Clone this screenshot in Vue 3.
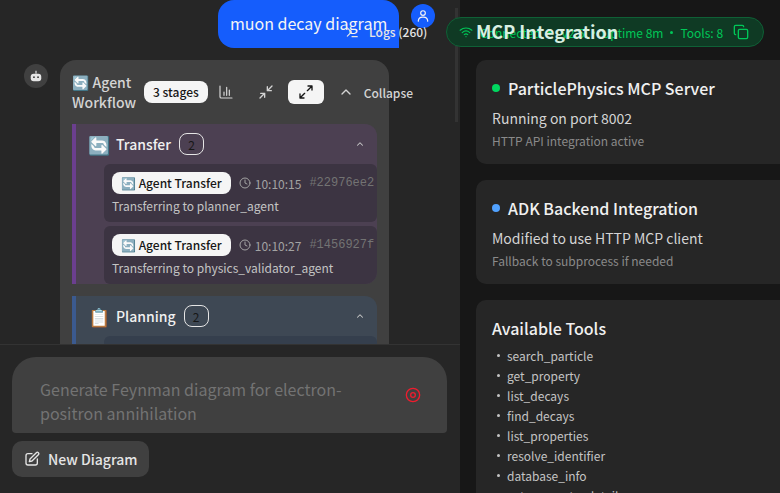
<template>
  <div class="page">
    <section class="chat">
      <div class="messages">
        <div class="user-row">
          <div class="user-bubble">muon decay diagram</div>
          <span class="user-avatar">
            <svg width="14" height="14" viewBox="0 0 24 24" fill="none" stroke="currentColor" stroke-width="2" stroke-linecap="round" stroke-linejoin="round">
              <circle cx="12" cy="7" r="4" />
              <path d="M4 21v-1a7 7 0 0 1 7-6h2a7 7 0 0 1 7 6v1" />
            </svg>
          </span>
        </div>
        <div class="bot-row">
          <span class="bot-avatar">
            <svg width="14" height="14" viewBox="0 0 24 24" fill="currentColor">
              <rect x="3" y="8" width="18" height="13" rx="5" />
              <rect x="11" y="3" width="2" height="5" />
              <circle cx="8.5" cy="14" r="1.6" fill="#3d3d3d" />
              <circle cx="15.5" cy="14" r="1.6" fill="#3d3d3d" />
            </svg>
          </span>
          <div class="workflow">
            <div class="wf-head">
              <div class="wf-title">🔄 Agent Workflow</div>
              <span class="stages">3 stages</span>
              <button class="icon-btn first">
                <svg width="16" height="16" viewBox="0 0 24 24" fill="none" stroke="currentColor" stroke-width="1.8" stroke-linecap="round">
                  <path d="M3 3v16a2 2 0 0 0 2 2h16" />
                  <path d="M9 17v-5M13 17V5M17 17V9" />
                </svg>
              </button>
              <button class="icon-btn">
                <svg width="16" height="16" viewBox="0 0 24 24" fill="none" stroke="currentColor" stroke-width="2" stroke-linecap="round" stroke-linejoin="round">
                  <path d="M14 10l7-7M14 4v6h6M10 14l-7 7M4 14h6v6" />
                </svg>
              </button>
              <button class="icon-btn active">
                <svg width="16" height="16" viewBox="0 0 24 24" fill="none" stroke="currentColor" stroke-width="2" stroke-linecap="round" stroke-linejoin="round">
                  <path d="M15 3h6v6M21 3l-7 7M9 21H3v-6M3 21l7-7" />
                </svg>
              </button>
              <button class="collapse">
                <svg width="16" height="16" viewBox="0 0 24 24" fill="none" stroke="currentColor" stroke-width="2" stroke-linecap="round" stroke-linejoin="round">
                  <path d="M6 15l6-6 6 6" />
                </svg>
                <span>Collapse</span>
              </button>
            </div>
            <div v-for="stage in stages" :key="stage.name" class="stage" :class="stage.cls">
              <div class="stage-head">
                <span class="stage-emoji">{{ stage.emoji }}</span>
                <span class="stage-name">{{ stage.name }}</span>
                <span class="stage-count">2</span>
                <svg class="stage-chevron" width="10" height="10" viewBox="0 0 24 24" fill="none" stroke="currentColor" stroke-width="2.5" stroke-linecap="round" stroke-linejoin="round">
                  <path d="M6 15l6-6 6 6" />
                </svg>
              </div>
              <div v-for="ev in stage.events" :key="ev.id" class="event">
                <div class="event-top">
                  <span class="event-tag">🔄 Agent Transfer</span>
                  <span class="event-time">
                    <svg width="12" height="12" viewBox="0 0 24 24" fill="none" stroke="currentColor" stroke-width="2" stroke-linecap="round" stroke-linejoin="round">
                      <circle cx="12" cy="12" r="10" />
                      <path d="M12 6v6l4 2" />
                    </svg>
                    {{ ev.time }}
                  </span>
                  <span class="event-id">{{ ev.id }}</span>
                </div>
                <div class="event-text">{{ ev.text }}</div>
              </div>
              <div v-if="!stage.events.length" class="event"></div>
            </div>
          </div>
        </div>
      </div>
      <div class="composer">
        <div class="input-box">
          <div class="placeholder">Generate Feynman diagram for electron-positron annihilation</div>
          <svg class="record" width="16" height="16" viewBox="0 0 24 24" fill="none" stroke="#ef1c2e" stroke-width="2">
            <circle cx="12" cy="12" r="10" />
            <circle cx="12" cy="12" r="3.5" />
          </svg>
        </div>
        <button class="new-btn">
          <svg width="16" height="16" viewBox="0 0 24 24" fill="none" stroke="currentColor" stroke-width="2" stroke-linecap="round" stroke-linejoin="round">
            <path d="M12 4H6a3 3 0 0 0-3 3v11a3 3 0 0 0 3 3h11a3 3 0 0 0 3-3v-6" />
            <path d="M18.5 2.5a2.1 2.1 0 0 1 3 3L12 15l-4 1 1-4z" />
          </svg>
          New Diagram
        </button>
      </div>
    </section>

    <aside class="side">
      <span class="rail-thumb"></span>
      <div class="side-body">
        <div class="side-title">MCP Integration</div>
        <div class="card">
          <div class="card-title"><span class="dot green"></span>ParticlePhysics MCP Server</div>
          <div class="card-main">Running on port 8002</div>
          <div class="card-sub">HTTP API integration active</div>
        </div>
        <div class="card">
          <div class="card-title"><span class="dot blue"></span>ADK Backend Integration</div>
          <div class="card-main">Modified to use HTTP MCP client</div>
          <div class="card-sub">Fallback to subprocess if needed</div>
        </div>
        <div class="card">
          <div class="card-title plain">Available Tools</div>
          <ul class="tools">
            <li v-for="t in tools" :key="t">{{ t }}</li>
          </ul>
        </div>
      </div>
    </aside>

    <div class="logs">
      <svg width="14" height="14" viewBox="0 0 24 24" fill="none" stroke="currentColor" stroke-width="2" stroke-linecap="round" stroke-linejoin="round">
        <path d="M4 5l7 7-7 7M12 20h9" />
      </svg>
      <span>Logs (260)</span>
    </div>
    <div class="status">
      <svg class="wifi" width="14" height="14" viewBox="0 0 24 24" fill="none" stroke="currentColor" stroke-width="2" stroke-linecap="round">
        <path d="M2 9a15 15 0 0 1 20 0M5.5 13a10 10 0 0 1 13 0M9 16.5a5 5 0 0 1 6 0M12 20h.01" />
      </svg>
      <span>Connected</span>
      <span class="sep"></span>
      <span class="ver">v2.5</span>
      <span class="sep"></span>
      <span>Uptime 8m</span>
      <span class="sep"></span>
      <span>Tools: 8</span>
      <svg class="copy" width="16" height="16" viewBox="0 0 24 24" fill="none" stroke="currentColor" stroke-width="2" stroke-linecap="round" stroke-linejoin="round">
        <rect x="8" y="8" width="14" height="14" rx="2" />
        <path d="M4 16a2 2 0 0 1-2-2V4a2 2 0 0 1 2-2h10a2 2 0 0 1 2 2" />
      </svg>
    </div>
  </div>
</template>

<script setup>
const stages = [
  {
    name: 'Transfer',
    emoji: '🔄',
    cls: 'purple',
    events: [
      { id: '#22976ee2', time: '10:10:15', text: 'Transferring to planner_agent' },
      { id: '#1456927f', time: '10:10:27', text: 'Transferring to physics_validator_agent' }
    ]
  },
  { name: 'Planning', emoji: '📋', cls: 'blue', events: [] }
]

const tools = [
  'search_particle',
  'get_property',
  'list_decays',
  'find_decays',
  'list_properties',
  'resolve_identifier',
  'database_info',
  'get_property_details'
]
</script>

<style>
html,
body {
  margin: 0;
  background: #171717;
  overflow: hidden;
}
</style>

<style scoped>
.page {
  position: relative;
  display: flex;
  width: 780px;
  height: 493px;
  overflow: hidden;
  color: #e5e5e5;
  font-family: "Noto Sans CJK SC", "Noto Sans", "Noto Color Emoji", sans-serif;
}

.chat {
  display: flex;
  flex-direction: column;
  flex: none;
  width: 460px;
  height: 493px;
  background: #262626;
}

.messages {
  flex: none;
  height: 345px;
  padding: 0 0 0 24px;
  box-sizing: border-box;
  overflow: hidden;
  border-bottom: 1px solid #333;
}

.user-row {
  display: flex;
  justify-content: flex-end;
  gap: 12px;
  width: 411px;
}

.user-bubble {
  box-sizing: border-box;
  width: 181px;
  height: 48px;
  padding: 11px 12px;
  background: #155dfc;
  border-radius: 16px 16px 0 16px;
  color: #f5f5f5;
  font-size: 16px;
  line-height: 24px;
  white-space: nowrap;
}

.user-avatar {
  display: flex;
  align-items: center;
  justify-content: center;
  width: 24px;
  height: 24px;
  margin-top: 4px;
  border-radius: 50%;
  background: #155dfc;
  color: #f5f5f5;
}

.bot-row {
  display: flex;
  gap: 12px;
  margin-top: 12px;
}

.bot-avatar {
  display: flex;
  align-items: center;
  justify-content: center;
  flex: none;
  width: 24px;
  height: 24px;
  margin-top: 4px;
  border-radius: 50%;
  background: #404040;
  color: #e5e5e5;
}

.workflow {
  flex: none;
  box-sizing: border-box;
  width: 329px;
  height: 320px;
  padding: 12px 0 0 12px;
  border-radius: 16px 16px 0 0;
  background: #404040;
}

.wf-head {
  display: flex;
  align-items: center;
  width: 360px;
  height: 40px;
  margin-bottom: 12px;
}

.wf-title {
  width: 72px;
  font-size: 14px;
  font-weight: 500;
  line-height: 20px;
  color: #d4d4d4;
}

.stages {
  display: flex;
  align-items: center;
  box-sizing: border-box;
  height: 22px;
  padding: 0 9px 1px;
  border-radius: 8px;
  background: #f5f5f5;
  color: #171717;
  font-size: 12px;
  font-weight: 500;
}

.icon-btn {
  display: flex;
  align-items: center;
  justify-content: center;
  width: 36px;
  height: 24px;
  padding: 0;
  border: 0;
  border-radius: 6px;
  background: transparent;
  color: #d4d4d4;
}

.icon-btn.first {
  margin-right: 4px;
}

.icon-btn.active {
  margin-left: 4px;
  background: #f5f5f5;
  color: #171717;
}

.collapse {
  display: flex;
  align-items: center;
  gap: 10px;
  margin-left: 14px;
  padding: 0;
  border: 0;
  background: transparent;
  color: #d4d4d4;
  font: inherit;
  font-size: 12px;
  font-weight: 500;
}

.stage {
  box-sizing: border-box;
  width: 305px;
  margin-bottom: 12px;
  border-left: 4px solid;
  border-radius: 0 12px 12px 0;
  overflow: hidden;
}

.stage.purple {
  background: #4c4052;
  border-color: #6b3f8f;
}

.stage.blue {
  background: #3e4854;
  border-color: #3b5a8f;
}

.stage-head {
  display: flex;
  align-items: center;
  height: 40px;
  padding: 0 12px;
}

.stage-emoji {
  width: 28px;
  font-size: 18px;
  line-height: 1;
}

.stage-name {
  font-size: 14px;
  font-weight: 500;
  color: #f0f0f0;
}

.stage-count {
  display: flex;
  align-items: center;
  justify-content: center;
  box-sizing: border-box;
  min-width: 25px;
  height: 22px;
  margin-left: 8px;
  border: 1px solid #e5e5e5;
  border-radius: 8px;
  color: #171717;
  font-size: 12px;
}

.stage-chevron {
  margin-left: auto;
  color: #c8c8c8;
}

.event {
  box-sizing: border-box;
  height: 58px;
  margin: 0 0 4px 28px;
  padding: 8px 0 0 8px;
  border-radius: 6px;
  background: #3c3442;
  overflow: hidden;
  white-space: nowrap;
}

.event:last-child {
  margin-bottom: 0;
}

.stage.blue .event {
  background: #353f4d;
}

.event-top {
  display: flex;
  align-items: center;
  height: 22px;
}

.event-tag {
  display: flex;
  align-items: center;
  box-sizing: border-box;
  height: 22px;
  padding: 0 9px 1px;
  border-radius: 8px;
  background: #f5f5f5;
  color: #171717;
  font-size: 12px;
  font-weight: 500;
}

.event-time {
  display: flex;
  align-items: center;
  gap: 4px;
  margin-left: 8px;
  color: #a3a3a3;
  font-size: 12px;
}

.event-id {
  margin-left: 8px;
  color: #737373;
  font-family: "Liberation Mono", monospace;
  font-size: 12px;
}

.event-text {
  margin-top: 3px;
  color: #c4c4c4;
  font-size: 12px;
  line-height: 18px;
}

.composer {
  flex: 1;
  padding: 12px;
}

.input-box {
  display: flex;
  align-items: flex-start;
  box-sizing: border-box;
  width: 435px;
  height: 76px;
  padding: 20px 26px 0 28px;
  border-radius: 24px 24px 4px 4px;
  background: #404040;
}

.placeholder {
  width: 320px;
  color: #737373;
  font-size: 16px;
  line-height: 24px;
}

.record {
  margin: 10px 0 0 auto;
}

.new-btn {
  display: flex;
  align-items: center;
  gap: 8px;
  height: 36px;
  margin-top: 8px;
  padding: 0 11px 0 12px;
  border: 0;
  border-radius: 10px;
  background: #404040;
  color: #e5e5e5;
  font: inherit;
  font-size: 14px;
  font-weight: 500;
}

.side {
  position: relative;
  display: flex;
  flex: 1;
  min-width: 0;
  background: #171717;
}

.rail-thumb {
  position: absolute;
  left: -5px;
  top: 8px;
  width: 3px;
  height: 114px;
  background: #333;
}

.side-body {
  flex: 1;
  padding: 18px 0 0 16px;
  overflow: hidden;
}

.side-title {
  position: relative;
  z-index: 2;
  height: 24px;
  margin-bottom: 18px;
  color: #d8efe2;
  font-size: 18px;
  font-weight: 700;
  line-height: 27px;
}

.card {
  box-sizing: border-box;
  width: 320px;
  height: 104px;
  margin-bottom: 16px;
  padding: 16px 16px 0;
  border-radius: 10px;
  background: #262626;
}

.card:last-child {
  height: 260px;
}

.card-title {
  display: flex;
  align-items: center;
  gap: 8px;
  color: #f0f0f0;
  font-size: 16px;
  font-weight: 500;
  line-height: 24px;
}

.dot {
  width: 8px;
  height: 8px;
  border-radius: 50%;
}

.dot.green {
  background: #00d75f;
}

.dot.blue {
  background: #51a2ff;
}

.card-main {
  margin-top: 8px;
  color: #d4d4d4;
  font-size: 14px;
  line-height: 20px;
}

.card-sub {
  margin-top: 5px;
  color: #8a8a8a;
  font-size: 12px;
  line-height: 16px;
}

.tools {
  margin: 5px 0 0;
  padding: 0;
  list-style: none;
  color: #c4c4c4;
  font-size: 12px;
}

.tools li {
  display: flex;
  align-items: center;
  height: 20px;
}

.tools li::before {
  content: "";
  width: 3px;
  height: 3px;
  margin: 0 7px 0 5px;
  border-radius: 50%;
  background: #c4c4c4;
}

.logs {
  position: absolute;
  z-index: 1;
  top: 23px;
  left: 345px;
  display: flex;
  align-items: center;
  gap: 10px;
  color: #e5e5e5;
  font-size: 12px;
  font-weight: 500;
  line-height: 18px;
}

.status {
  position: absolute;
  z-index: 1;
  top: 17px;
  left: 446px;
  display: flex;
  align-items: center;
  gap: 7px;
  box-sizing: border-box;
  width: 318px;
  height: 30px;
  padding: 0 14px 0 12px;
  border: 1px solid #0f6036;
  border-radius: 15px;
  background: #0f3a24;
  color: #00c758;
  font-size: 12px;
  white-space: nowrap;
}

.status svg {
  flex: none;
}

.sep {
  flex: none;
  width: 3px;
  height: 3px;
  border-radius: 50%;
  background: #00c758;
}

.ver {
  margin: 0 0 0 4px;
}

.status .copy {
  margin-left: auto;
}
</style>
